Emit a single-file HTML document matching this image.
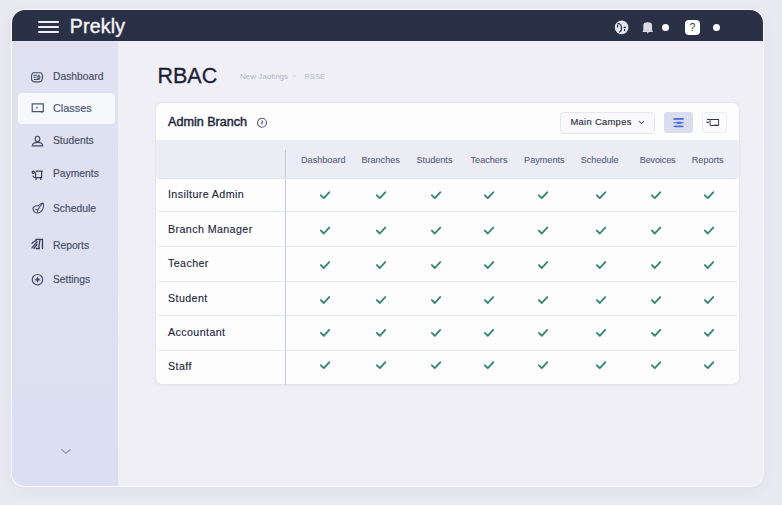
<!DOCTYPE html>
<html><head><meta charset="utf-8">
<style>
*{margin:0;padding:0;box-sizing:border-box}
html,body{width:782px;height:505px;overflow:hidden}
body{font-family:"Liberation Sans",sans-serif;background:#e8e9f1;position:relative}
.a{position:absolute;white-space:nowrap;line-height:1}
#win{position:absolute;left:12.3px;top:10px;width:751px;height:476px;border-radius:13px;overflow:hidden;background:#efeff5;box-shadow:0 0 0 1px #f8f8fc,0 4px 16px rgba(130,135,170,.09)}
#hdr{position:absolute;left:0;top:0;width:752px;height:30.7px;background:#2a3045}
#side{position:absolute;left:0;top:30.7px;width:105.5px;height:446px;background:linear-gradient(180deg,#e0e2f1,#dcdff1)}
.nav{font-size:10.3px;color:#464c64;left:53px;-webkit-text-stroke:.15px #464c64}
.ico{position:absolute}
#card{position:absolute;left:156.3px;top:103.2px;width:582.5px;height:281px;background:#fdfdfe;border-radius:6px;box-shadow:0 0 0 1px #e4e5ee,0 1px 3px rgba(120,125,160,.12);overflow:hidden}
.ht{top:155.5px;font-size:9.1px;color:#596080;-webkit-text-stroke:.1px #596080;transform:translateX(-50%)}
.rt{left:168px;font-size:10.7px;letter-spacing:.4px;color:#22263a;-webkit-text-stroke:.12px #22263a}
.rl{position:absolute;left:158px;width:579px;height:1px;background:#e5e7f0}
.ck{position:absolute;width:11px;height:8px}
</style></head><body>
<div id="win">
  <div id="hdr">
    <div class="a" style="left:25.7px;top:11.4px;width:21.5px;height:2px;background:#eef0f5;border-radius:1px"></div>
    <div class="a" style="left:25.7px;top:16.4px;width:21.5px;height:2px;background:#eef0f5;border-radius:1px"></div>
    <div class="a" style="left:25.7px;top:21.4px;width:21.5px;height:2px;background:#eef0f5;border-radius:1px"></div>
    <div class="a" style="left:57.5px;top:7px;font-size:19.5px;letter-spacing:.2px;color:#f4f5f8;-webkit-text-stroke:.4px #f4f5f8">Prekly</div>
  </div>
  <div id="side"></div>
</div>

<!-- header icons -->
<svg class="ico" style="left:614px;top:20px" width="15" height="15" viewBox="0 0 15 15">
  <circle cx="7.6" cy="7.4" r="6.8" fill="#e4e5ee"/>
  <path d="M4 3.6 C5.5 3.1 6.8 4.5 7.4 6.8 C7.9 9 7.1 11 5.6 12" stroke="#2a3045" stroke-width="1.2" fill="none" stroke-linecap="round"/>
  <path d="M3.6 4.9 V7.1 M10 7.3 H11.5 M10.6 9.4 V10.6" stroke="#2a3045" stroke-width="1.2" fill="none" stroke-linecap="round"/>
</svg>
<svg class="ico" style="left:642px;top:22px" width="12" height="13" viewBox="0 0 12 13">
  <path d="M1.3 3.8 C1.3 1.3 2.5 0.3 5.7 0.3 C8.9 0.3 10.1 1.3 10.1 3.8 L10.1 8.2 L10.9 9.9 L0.5 9.9 L1.3 8.2 Z" fill="#d9dae6"/>
  <path d="M4.6 9.9 L5.7 11.9 L6.8 9.9 Z" fill="#b8bacb"/>
</svg>
<div class="a" style="left:662px;top:24px;width:7px;height:7px;border-radius:50%;background:#ffffff"></div>
<div class="a" style="left:685px;top:20px;width:15px;height:15px;border-radius:4px;background:#ffffff;font-size:10.5px;color:#333a50;text-align:center;line-height:15.5px">?</div>
<div class="a" style="left:713px;top:24px;width:7px;height:7px;border-radius:50%;background:#ffffff"></div>

<!-- sidebar -->
<div class="a" style="left:18px;top:93px;width:97px;height:31px;border-radius:4px;background:#f7f8fc"></div>
<div class="a nav" style="top:71.9px">Dashboard</div>
<div class="a nav" style="top:103.2px;color:#4b5378;font-size:10.9px;-webkit-text-stroke:.15px #4b5378">Classes</div>
<div class="a nav" style="top:135.9px">Students</div>
<div class="a nav" style="top:169.3px">Payments</div>
<div class="a nav" style="top:204.1px">Schedule</div>
<div class="a nav" style="top:240.5px">Reports</div>
<div class="a nav" style="top:275.3px">Settings</div>

<!-- sidebar icons -->
<svg class="ico" style="left:30px;top:71px" width="14" height="13" viewBox="0 0 14 13" fill="none" stroke="#454b63" stroke-width="1.15">
  <path d="M3.8 1.7 H10.2 C11.9 1.7 12.5 2.9 12.5 5.7 C12.5 9 11.7 10.8 9.4 10.8 H4.3 C2.3 10.8 1.5 9.6 1.5 6.4 C1.5 3.1 2.1 1.7 3.8 1.7 Z"/>
  <path d="M3.4 4.3 H7 M3.4 6.3 H6.5 M3.8 8.4 H7.5 M8 4.3 V8.4 C10.6 8.4 10.6 4.3 8 4.3" stroke-width="1.05"/>
</svg>
<svg class="ico" style="left:31px;top:102px" width="14" height="13" viewBox="0 0 14 13" fill="none" stroke="#4b5378" stroke-width="1.2">
  <path d="M1.2 1.8 H12.3 V9.6 H1.2 Z"/>
  <path d="M10.2 9.6 L11 10.6" stroke-width="1.3"/>
  <rect x="5.3" y="4.8" width="1.3" height="1.7" fill="#4b5378" stroke="none"/>
</svg>
<svg class="ico" style="left:31px;top:135px" width="13" height="12" viewBox="0 0 13 12" fill="none" stroke="#454b63" stroke-width="1.15">
  <path d="M4.2 4 C4.2 2 5 1.2 6.5 1.2 C8 1.2 8.8 2 8.8 4 C8.8 5.8 8 6.6 6.5 6.6 C5 6.6 4.2 5.8 4.2 4 Z"/>
  <path d="M1.3 10.8 C1.5 8.4 3.2 7.4 6.5 7.4 C9.8 7.4 11.5 8.4 11.7 10.8 Z"/>
</svg>
<svg class="ico" style="left:31px;top:168.7px" width="13" height="12" viewBox="0 0 13 12" fill="none" stroke="#3a4058" stroke-width="1.2" stroke-linecap="round">
  <circle cx="2.3" cy="3.3" r="1.1"/>
  <path d="M5 2.2 H11.4 M10.6 2.6 V8.6 H4.5 M4.6 3.8 V7.5 M2.1 7 C2.2 8.2 2.8 8.6 4.5 8.6 M5.4 9.2 L5 10.6 M9.7 9 V10.4"/>
</svg>
<svg class="ico" style="left:31px;top:201px" width="14" height="13" viewBox="0 0 14 13" fill="none" stroke="#454b62" stroke-width="1.05">
  <path d="M1.8 7.3 C3 5 5 4.5 7.3 4.8 C9.5 3 10.5 2 12 2 C12.8 3 12.8 6.5 11.5 8.8 C10 11.5 7.5 12.3 5 11.8 C3.2 11.4 2.2 9.2 1.8 7.3 Z"/>
  <path d="M6.2 11.5 C7 8 9.5 4.5 12 2.2 M4.5 8 L6.8 9.3"/>
</svg>
<svg class="ico" style="left:31px;top:238px" width="13" height="12" viewBox="0 0 13 12" fill="none" stroke="#383e56" stroke-width="1.3" stroke-linecap="round">
  <path d="M1 9.9 L6.3 3.7 M1 5.3 C2.5 3.8 4 2.8 5.3 2.3 M4.9 1.3 H11.5 V10.6 M9 1.6 L7.9 8.5 M5.3 10.5 H8.3 L7.9 8.5 M3 10.3 L6 6.5"/>
</svg>
<svg class="ico" style="left:31px;top:273px" width="13" height="13" viewBox="0 0 13 13" fill="none" stroke="#454b63" stroke-width="1.15">
  <circle cx="6.5" cy="6.7" r="5.2"/>
  <path d="M6.5 4.1 Q6.9 6.3 9.1 6.7 Q6.9 7.1 6.5 9.3 Q6.1 7.1 3.9 6.7 Q6.1 6.3 6.5 4.1 Z" fill="#454b63" stroke-width=".6"/>
</svg>
<svg class="ico" style="left:60px;top:448px" width="12" height="7" viewBox="0 0 12 7" fill="none" stroke="#8088a6" stroke-width="1.1">
  <path d="M1.5 1.3 L6 5.3 L10.5 1.3"/>
</svg>

<!-- title -->
<div class="a" style="left:157.5px;top:66.3px;font-size:21.5px;color:#1b2035;-webkit-text-stroke:.3px #1b2035">RBAC</div>
<div class="a" style="left:240px;top:72.8px;font-size:8px;color:#b3b7c7">New Jaotings</div>
<svg class="ico" style="left:292px;top:74px" width="5" height="4" viewBox="0 0 5 4" fill="none" stroke="#c0c3d0" stroke-width=".9"><path d="M.8 1 L2.5 2.8 L4.2 1"/></svg>
<div class="a" style="left:304.5px;top:72.8px;font-size:7.5px;color:#b3b7c7">RSSE</div>

<!-- card -->
<div id="card">
  <div class="a" style="left:0;top:37px;width:583px;height:38px;background:#ecedf4"></div>
</div>
<div class="a" style="left:168px;top:116.1px;font-size:12.6px;color:#22273a;-webkit-text-stroke:.45px #22273a">Admin Branch</div>
<svg class="ico" style="left:256px;top:117px" width="12" height="12" viewBox="0 0 12 12" fill="none" stroke="#565c78" stroke-width="1.1">
  <circle cx="6" cy="5.8" r="4.5"/>
  <path d="M6.4 3.6 L5.8 7.4" stroke-width="1.3" stroke="#4a5070"/>
</svg>

<!-- dropdown & buttons -->
<div class="a" style="left:561px;top:112.5px;width:93px;height:20px;border-radius:3.5px;background:#f9f9fc;box-shadow:0 0 0 1px #e5e7ee"></div>
<div class="a" style="left:570.5px;top:116.9px;font-size:9.4px;letter-spacing:.3px;color:#2a2f42;-webkit-text-stroke:.15px #2a2f42">Main Campes</div>
<svg class="ico" style="left:638px;top:120px" width="7" height="5" viewBox="0 0 7 5" fill="none" stroke="#454b62" stroke-width="1.05"><path d="M1 1 L3.5 3.5 L6 1"/></svg>
<div class="a" style="left:664px;top:112px;width:28.5px;height:20.5px;border-radius:3px;background:#d9ddef"></div>
<svg class="ico" style="left:671px;top:115px" width="14" height="14" viewBox="0 0 14 14" fill="none" stroke="#4d6ed8">
  <path d="M2.4 3.9 H12.7 M2.4 7.8 H12.7 M2.4 11.4 H12.7" stroke-width="1"/>
  <path d="M2.6 3.9 H12.5" stroke-width="1.7"/>
  <path d="M5.8 7.8 H10.5" stroke-width="2.2"/>
  <path d="M3.5 11.4 H11.6" stroke-width="1.7"/>
</svg>
<div class="a" style="left:702.5px;top:112.5px;width:23px;height:19.5px;border-radius:3px;background:#fbfbfd;box-shadow:0 0 0 1px #eceef4"></div>
<svg class="ico" style="left:705px;top:117px" width="16" height="12" viewBox="0 0 16 12" fill="none" stroke="#343a4e" stroke-width="1">
  <path d="M2 2.5 H14 M5.1 2.5 V8.5 H13.6 V2.5"/>
  <path d="M1.5 5.3 H3.8" stroke-width="1.4"/>
  <path d="M9.5 7.5 H12.5" stroke="#8a90a5" stroke-width=".8"/>
</svg>

<!-- table header -->
<div class="a" style="left:285px;top:150px;width:1px;height:234.5px;background:#c6cade"></div>
<div class="a ht" style="left:323.3px">Dashboard</div>
<div class="a ht" style="left:380.6px">Branches</div>
<div class="a ht" style="left:434.5px">Students</div>
<div class="a ht" style="left:489px">Teachers</div>
<div class="a ht" style="left:544.3px">Payments</div>
<div class="a ht" style="left:599.7px">Schedule</div>
<div class="a ht" style="left:657.6px;letter-spacing:-.15px">Bevoices</div>
<div class="a ht" style="left:707.7px">Reports</div>

<div class="rl" style="top:178px;background:#e3e5ef"></div>
<div class="rl" style="top:211px"></div>
<div class="rl" style="top:246px"></div>
<div class="rl" style="top:281px"></div>
<div class="rl" style="top:315px"></div>
<div class="rl" style="top:350px"></div>

<div class="a rt" style="top:189.2px">Insilture Admin</div>
<div class="a rt" style="top:223.6px">Branch Manager</div>
<div class="a rt" style="top:258.4px">Teacher</div>
<div class="a rt" style="top:292.7px">Student</div>
<div class="a rt" style="top:327.1px">Accountant</div>
<div class="a rt" style="top:361.4px">Staff</div>

<svg class="ico" style="left:0;top:0" width="782" height="505" viewBox="0 0 782 505" fill="none" stroke="#368570" stroke-width="1.85" stroke-linecap="round" stroke-linejoin="round">
<path d="M320.9 195.3L323.8 198.2L329.2 192.3M376.9 195.3L379.8 198.2L385.2 192.3M431.9 195.3L434.8 198.2L440.2 192.3M484.9 195.3L487.8 198.2L493.2 192.3M538.9 195.3L541.8 198.2L547.2 192.3M596.9 195.3L599.8 198.2L605.2 192.3M651.9 195.3L654.8 198.2L660.2 192.3M704.9 195.3L707.8 198.2L713.2 192.3"/>
<path d="M320.9 230.6L323.8 233.5L329.2 227.6M376.9 230.6L379.8 233.5L385.2 227.6M431.9 230.6L434.8 233.5L440.2 227.6M484.9 230.6L487.8 233.5L493.2 227.6M538.9 230.6L541.8 233.5L547.2 227.6M596.9 230.6L599.8 233.5L605.2 227.6M651.9 230.6L654.8 233.5L660.2 227.6M704.9 230.6L707.8 233.5L713.2 227.6"/>
<path d="M320.9 265.1L323.8 268.0L329.2 262.1M376.9 265.1L379.8 268.0L385.2 262.1M431.9 265.1L434.8 268.0L440.2 262.1M484.9 265.1L487.8 268.0L493.2 262.1M538.9 265.1L541.8 268.0L547.2 262.1M596.9 265.1L599.8 268.0L605.2 262.1M651.9 265.1L654.8 268.0L660.2 262.1M704.9 265.1L707.8 268.0L713.2 262.1"/>
<path d="M320.9 300.1L323.8 303.0L329.2 297.1M376.9 300.1L379.8 303.0L385.2 297.1M431.9 300.1L434.8 303.0L440.2 297.1M484.9 300.1L487.8 303.0L493.2 297.1M538.9 300.1L541.8 303.0L547.2 297.1M596.9 300.1L599.8 303.0L605.2 297.1M651.9 300.1L654.8 303.0L660.2 297.1M704.9 300.1L707.8 303.0L713.2 297.1"/>
<path d="M320.9 332.9L323.8 335.8L329.2 329.9M376.9 332.9L379.8 335.8L385.2 329.9M431.9 332.9L434.8 335.8L440.2 329.9M484.9 332.9L487.8 335.8L493.2 329.9M538.9 332.9L541.8 335.8L547.2 329.9M596.9 332.9L599.8 335.8L605.2 329.9M651.9 332.9L654.8 335.8L660.2 329.9M704.9 332.9L707.8 335.8L713.2 329.9"/>
<path d="M320.9 365.3L323.8 368.2L329.2 362.3M376.9 365.3L379.8 368.2L385.2 362.3M431.9 365.3L434.8 368.2L440.2 362.3M484.9 365.3L487.8 368.2L493.2 362.3M538.9 365.3L541.8 368.2L547.2 362.3M596.9 365.3L599.8 368.2L605.2 362.3M651.9 365.3L654.8 368.2L660.2 362.3M704.9 365.3L707.8 368.2L713.2 362.3"/>
</svg>
</body></html>
